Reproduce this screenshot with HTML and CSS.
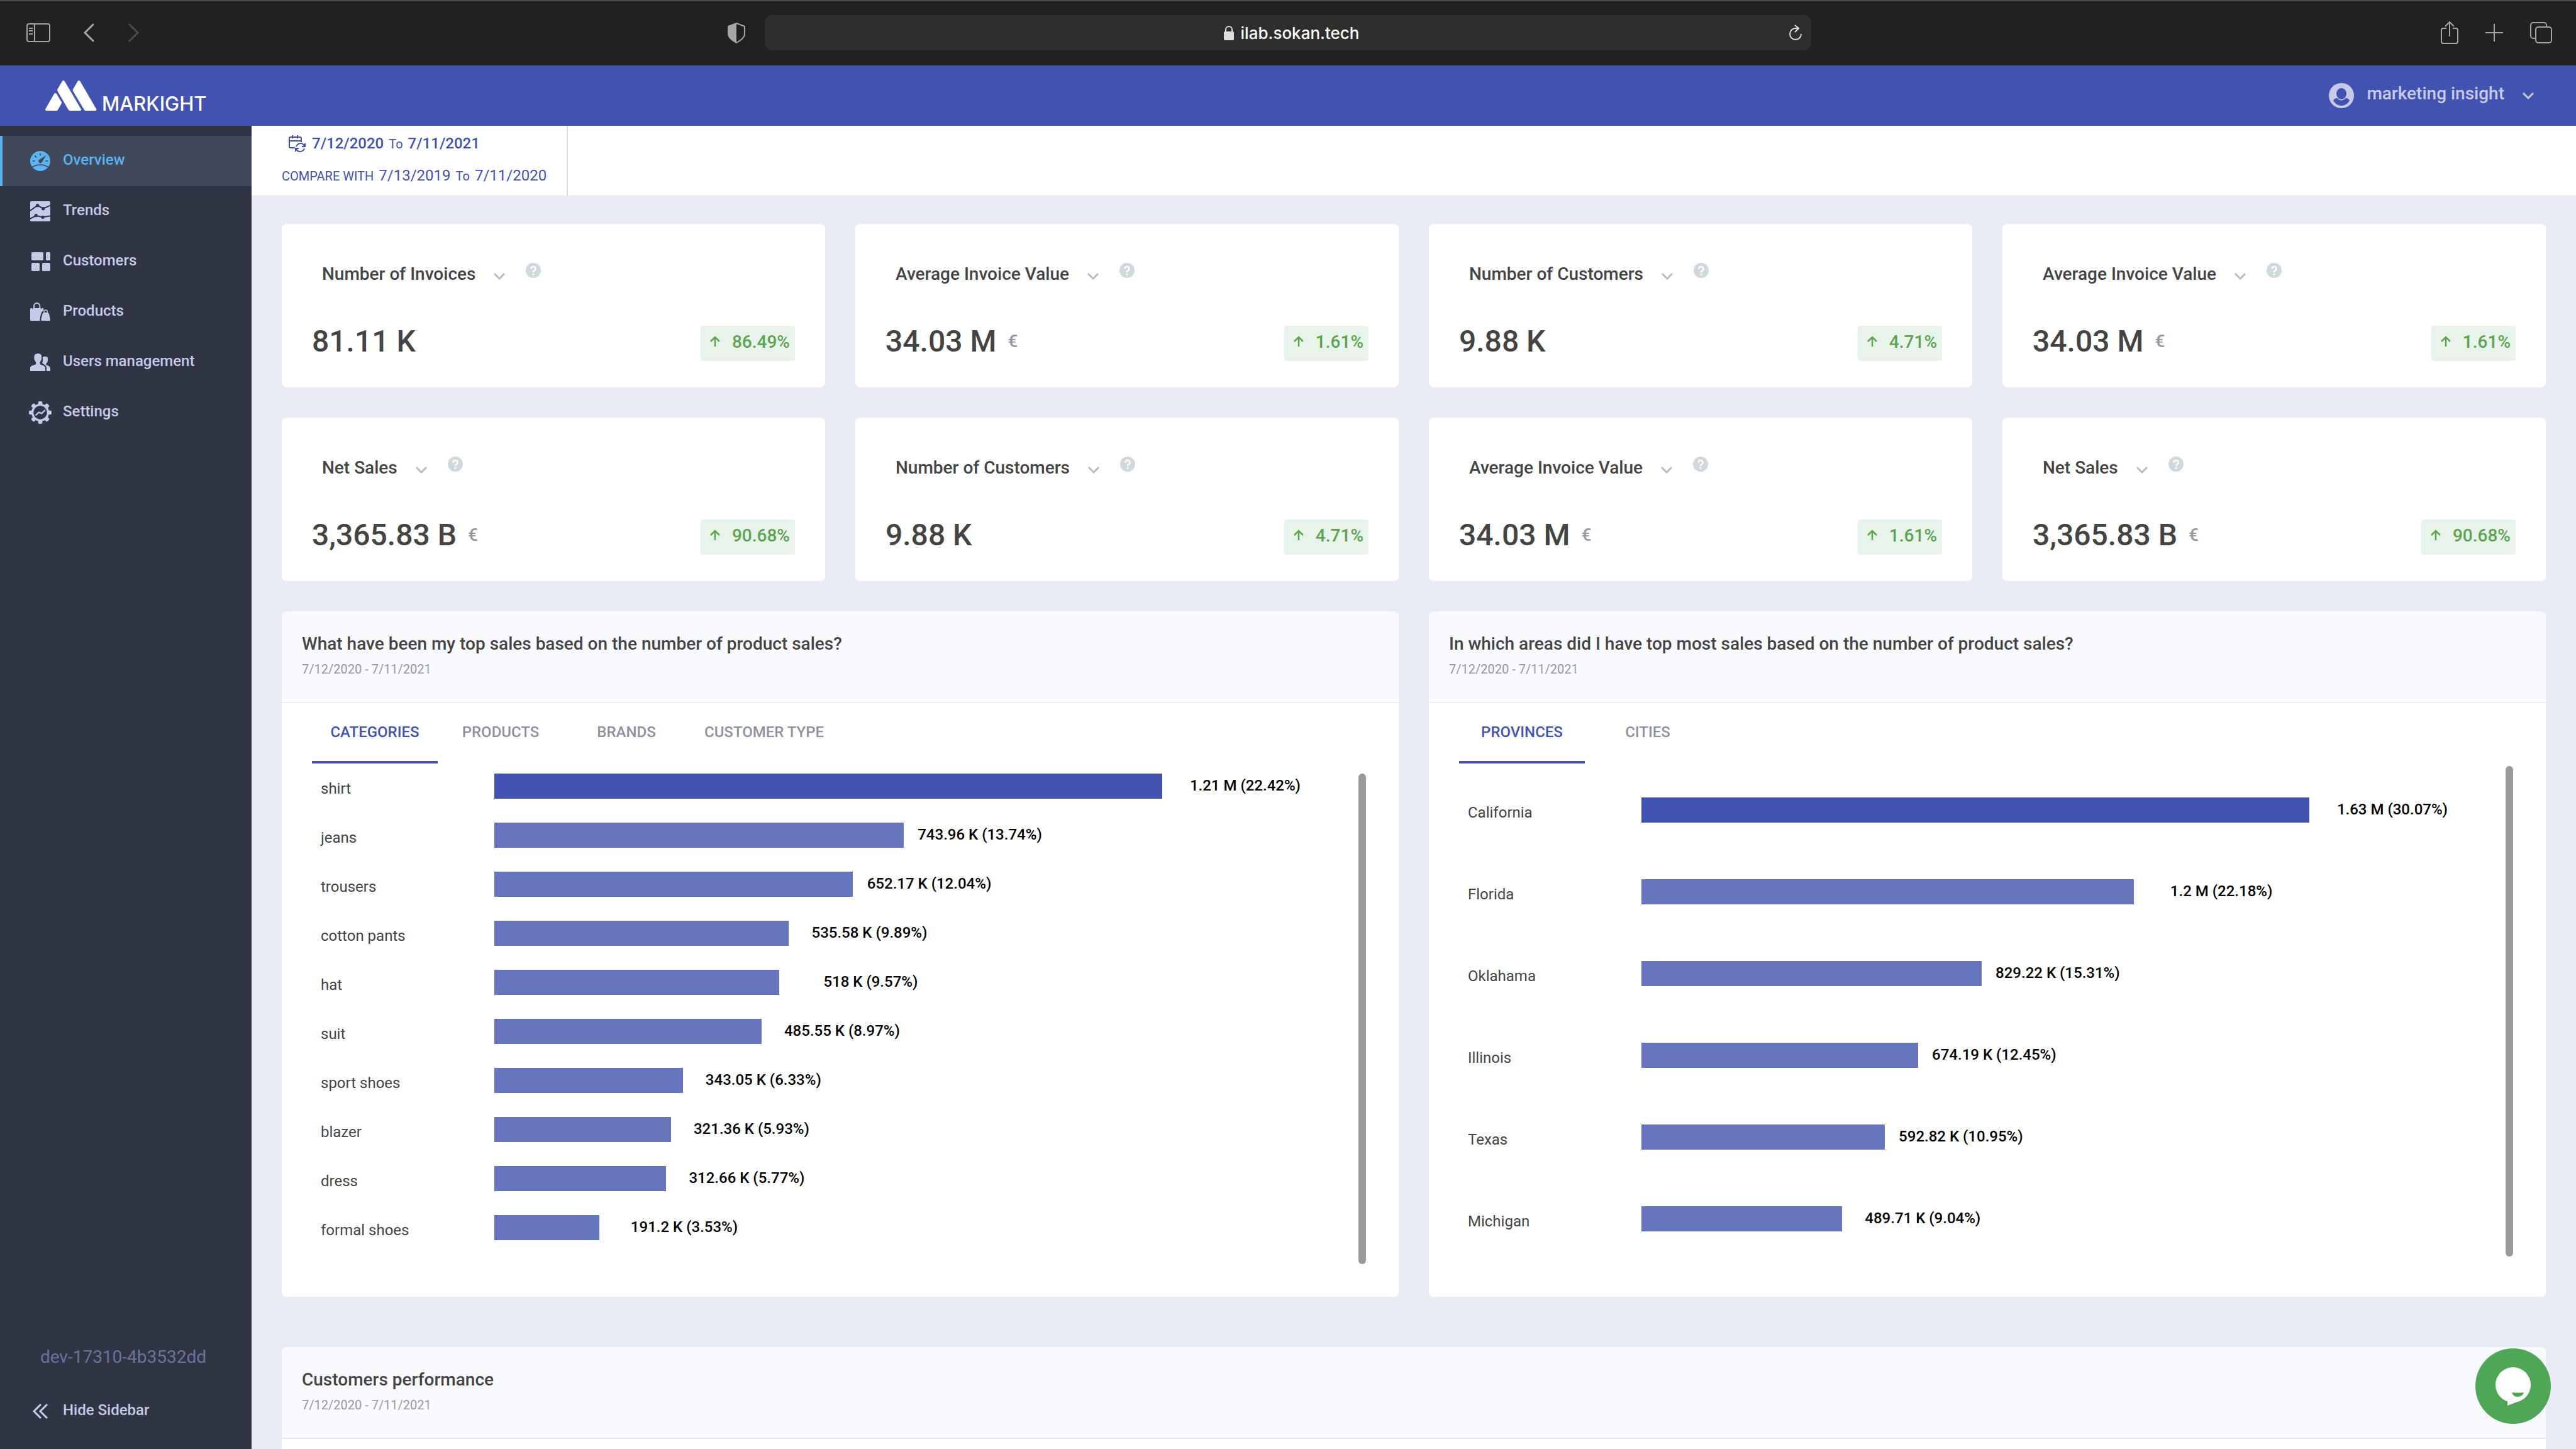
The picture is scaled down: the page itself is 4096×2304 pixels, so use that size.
FILE: index.html
```html
<!DOCTYPE html>
<html lang="en">
<head>
    <meta charset="UTF-8">
    <meta name="viewport" content="width=device-width, initial-scale=1.0">
    <title>Markight - Overview</title>
    <link rel="stylesheet" href="styles.css">
</head>
<body>
    <svg class="sprite" aria-hidden="true">
        <symbol id="chevron" viewBox="0 0 20 12"><path d="M2 2l8 8 8-8" fill="none" stroke="currentColor" stroke-width="3"/></symbol>
        <symbol id="help" viewBox="0 0 24 24"><circle cx="12" cy="12" r="12" fill="#cfd8dc"/><path d="M8.6 9.4a3.4 3.4 0 1 1 5 3c-1.2.7-1.6 1.2-1.6 2.6" fill="none" stroke="#fff" stroke-width="2.6"/><circle cx="12" cy="18" r="1.6" fill="#fff"/></symbol>
        <symbol id="up" viewBox="0 0 18 18"><path d="M9 17V2M2 9l7-7 7 7" fill="none" stroke="currentColor" stroke-width="2.5"/></symbol>
    </svg>

    <div class="browser">
        <div class="browser-left">
            <button class="icon-btn" aria-label="Show sidebar">
                <svg width="40" height="32" viewBox="0 0 40 32" fill="none" stroke="#a5a5a3" stroke-width="2"><rect x="2" y="2" width="36" height="28" rx="3"/><path d="M14 2v28M5 9h6M5 13h6M5 18h6"/></svg>
            </button>
            <button class="icon-btn back" aria-label="Back">
                <svg width="18" height="30" viewBox="0 0 18 30" fill="none" stroke="#a5a5a3" stroke-width="3" stroke-linecap="round"><path d="M16 2L3 15l13 13"/></svg>
            </button>
            <button class="icon-btn forward" aria-label="Forward">
                <svg width="18" height="30" viewBox="0 0 18 30" fill="none" stroke="#4b4b49" stroke-width="3" stroke-linecap="round"><path d="M2 2l13 13L2 28"/></svg>
            </button>
            <button class="icon-btn shield" aria-label="Privacy report">
                <svg width="30" height="34" viewBox="0 0 30 34"><path d="M15 2L28 7v11c0 7-6 11-13 15C8 29 2 25 2 18V7z" fill="none" stroke="#a5a5a3" stroke-width="2"/><path d="M15 2L2 7v11c0 7 6 11 13 15z" fill="#a5a5a3"/></svg>
            </button>
        </div>
        <div class="address">
            <span class="address-text">
                <svg width="18" height="26" viewBox="0 0 18 26"><path d="M4 12V8a5 5 0 0 1 10 0v4" fill="none" stroke="#dfdfdd" stroke-width="2"/><rect x="1" y="11" width="16" height="14" rx="2" fill="#dfdfdd"/></svg>
                ilab.sokan.tech
            </span>
            <button class="icon-btn" aria-label="Reload">
                <svg width="22" height="28" viewBox="0 0 22 28" fill="none" stroke="#dfdfdd" stroke-width="2"><path d="M20 16a9 9 0 1 1-9-9h5M10 2l6 5-6 6"/></svg>
            </button>
        </div>
        <div class="browser-right">
            <button class="icon-btn" aria-label="Share">
                <svg width="30" height="38" viewBox="0 0 30 38" fill="none" stroke="#a5a5a3" stroke-width="2"><path d="M10 12H5a3 3 0 0 0-3 3v18a3 3 0 0 0 3 3h20a3 3 0 0 0 3-3V15a3 3 0 0 0-3-3h-5M15 25V3M8 9l7-7 7 7"/></svg>
            </button>
            <button class="icon-btn" aria-label="New tab">
                <svg width="28" height="28" viewBox="0 0 28 28" stroke="#a5a5a3" stroke-width="2"><path d="M14 0v28M0 14h28"/></svg>
            </button>
            <button class="icon-btn" aria-label="Show tabs">
                <svg width="36" height="36" viewBox="0 0 36 36" fill="none" stroke="#a5a5a3" stroke-width="2"><rect x="10" y="9" width="25" height="25" rx="4"/><path d="M10 27H6a4 4 0 0 1-4-4V6a4 4 0 0 1 4-4h17a4 4 0 0 1 4 4v3"/></svg>
            </button>
        </div>
    </div>

    <header class="header">
        <a class="logo" href="#">
            <svg width="82" height="48" viewBox="0 0 246 144" fill="#fff"><path d="M43 62q5-4 10 0l24 40q3 4 0 8l-17 30q-3 4-7 4H6q-8-1-5-8z"/><path d="M81 3q5-6 11 0l79 134q2 6-5 7h-49q-4 0-7-5L58 50q-2-4 0-8z"/><path d="M155 3q5-6 11 0l78 134q2 6-5 7h-47q-4 0-7-5L132 50q-2-4 0-8z"/></svg>
            <span>MARKIGHT</span>
        </a>
        <button class="user">
            <svg width="40" height="40" viewBox="0 0 40 40"><circle cx="20" cy="20" r="20" fill="#c5cae9"/><ellipse cx="20" cy="17" rx="8" ry="9" fill="#4252b0"/><path d="M7 28q2-4 6-4 7 7 14 0 4 0 6 4-5 8-13 8T7 28z" fill="#4252b0"/></svg>
            <span class="user-name">marketing insight</span>
            <svg width="20" height="12"><use href="#chevron"/></svg>
        </button>
    </header>

    <div class="page">
        <aside class="sidebar">
            <nav class="menu">
                <a class="menu-item active" href="#">
                    <svg width="36" height="36" viewBox="-6 -6 108 108"><circle cx="48" cy="48" r="48" fill="#5bb3ef"/><g stroke="#40485c" fill="none" stroke-width="5"><path d="M48 11v11M22 22l8 9M11 48h12M73 48h12M8 78q40-24 80 0"/></g><path d="M76 21L57 52a9 9 0 1 1-15-9z" fill="#40485c"/></svg>
                    <span>Overview</span>
                </a>
                <a class="menu-item" href="#">
                    <svg width="36" height="36" viewBox="-6 -6 108 108"><rect width="96" height="96" rx="5" fill="#c5cae9"/><g stroke="#303544" fill="none" stroke-width="6"><path d="M-2 46l37-26 27 15 36-16M-2 84l30-15 32 7 38-6"/></g><g fill="#303544"><circle cx="35" cy="20" r="8"/><circle cx="62" cy="35" r="8"/><circle cx="28" cy="68" r="8"/><circle cx="60" cy="76" r="8"/></g></svg>
                    <span>Trends</span>
                </a>
                <a class="menu-item" href="#">
                    <svg width="36" height="36" viewBox="-6 -6 108 108" fill="#c5cae9"><rect x="6" y="3" width="57" height="39" rx="5"/><rect x="75" y="3" width="21" height="39" rx="5"/><rect x="6" y="54" width="39" height="39" rx="5"/><rect x="57" y="54" width="39" height="39" rx="5"/></svg>
                    <span>Customers</span>
                </a>
                <a class="menu-item" href="#">
                    <svg width="36" height="36" viewBox="-6 -6 108 108" fill="#c5cae9"><path d="M0 34q0-4 4-4h4q3 7 6 0h36q3 7 6 0h4q4 0 4 6v4q-16 10-18 50H5q-5 0-5-5z"/><path d="M18 32V20a14 14 0 0 1 28 0v12" fill="none" stroke="#c5cae9" stroke-width="6"/><path d="M52 85l6-27q3-8 9-8h14q7 0 9 8l6 27q0 5-4 5H56q-5 0-4-5z"/><path d="M66 52v-5a8 8 0 0 1 16 0v5" fill="none" stroke="#c5cae9" stroke-width="4"/></svg>
                    <span>Products</span>
                </a>
                <a class="menu-item" href="#">
                    <svg width="36" height="36" viewBox="-6 -6 108 108" fill="#c5cae9"><path d="M0 90V76q0-8 10-12l14-5q5-2 4-9l-6-12q-5-3-3-10Q16 8 36 6q22 0 18 22 2 8-3 11l-5 11q0 7 4 9l12 4q10 5 10 13v14z"/><path d="M59 24q11-7 22-1 5 4 3 14 0 12-8 18v6q20 6 20 16v13H78V76q0-10-12-18l-7-4q-3-4 1-10 2-8-1-20z"/></svg>
                    <span>Users management</span>
                </a>
                <a class="menu-item" href="#">
                    <svg width="36" height="36" viewBox="0 0 108 108"><g fill="#c5cae9"><rect x="44" width="20" height="108" rx="6"/><rect x="44" width="20" height="108" rx="6" transform="rotate(45 54 54)"/><rect x="44" width="20" height="108" rx="6" transform="rotate(90 54 54)"/><rect x="44" width="20" height="108" rx="6" transform="rotate(135 54 54)"/><circle cx="54" cy="54" r="42"/></g><circle cx="54" cy="54" r="32" fill="#303544"/><path d="M34 65l14-12 12 5 16-14" fill="none" stroke="#c5cae9" stroke-width="7" stroke-linecap="round"/></svg>
                    <span>Settings</span>
                </a>
            </nav>
            <div class="version">dev-17310-4b3532dd</div>
            <button class="menu-item hide-btn">
                <svg width="36" height="24" viewBox="0 0 36 24" fill="none" stroke="#c5cae9" stroke-width="3"><path d="M19 1L8 12l11 11M29 1L18 12l11 11"/></svg>
                <span>Hide Sidebar</span>
            </button>
        </aside>

        <main class="main">
            <div class="topbar">
                <button class="dates">
                    <span class="date-row current">
                        <svg width="28" height="28" viewBox="0 0 28 28" fill="none" stroke="#4252b0" stroke-width="2"><path d="M11 20H4a2 2 0 0 1-2-2V5a2 2 0 0 1 2-2h15a2 2 0 0 1 2 2v6M2 9h19M7 0v5M15 0v5M13 18q2-5 7-5 4 0 6 4M26 21q-2 5-7 5-4 0-6-4"/><path d="M27 13v5h-5M12 26v-5h5"/></svg>
                        <b>7/12/2020</b> <small>To</small> <b>7/11/2021</b>
                    </span>
                    <span class="date-row"><small>COMPARE WITH</small> 7/13/2019 <small>To</small> 7/11/2020</span>
                </button>
            </div>

            <div class="content">
                <section class="cards">
                    <div class="card">
                        <div class="card-head">
                            <button class="card-title">Number of Invoices <svg width="20" height="12"><use href="#chevron"/></svg></button>
                            <button class="help" aria-label="Help"><svg width="24" height="24"><use href="#help"/></svg></button>
                        </div>
                        <div class="card-foot">
                            <div class="value">81.11 K</div>
                            <div class="badge"><svg width="18" height="18"><use href="#up"/></svg>86.49%</div>
                        </div>
                    </div>
                    <div class="card">
                        <div class="card-head">
                            <button class="card-title">Average Invoice Value <svg width="20" height="12"><use href="#chevron"/></svg></button>
                            <button class="help" aria-label="Help"><svg width="24" height="24"><use href="#help"/></svg></button>
                        </div>
                        <div class="card-foot">
                            <div class="value">34.03 M <span class="unit">€</span></div>
                            <div class="badge"><svg width="18" height="18"><use href="#up"/></svg>1.61%</div>
                        </div>
                    </div>
                    <div class="card">
                        <div class="card-head">
                            <button class="card-title">Number of Customers <svg width="20" height="12"><use href="#chevron"/></svg></button>
                            <button class="help" aria-label="Help"><svg width="24" height="24"><use href="#help"/></svg></button>
                        </div>
                        <div class="card-foot">
                            <div class="value">9.88 K</div>
                            <div class="badge"><svg width="18" height="18"><use href="#up"/></svg>4.71%</div>
                        </div>
                    </div>
                    <div class="card">
                        <div class="card-head">
                            <button class="card-title">Average Invoice Value <svg width="20" height="12"><use href="#chevron"/></svg></button>
                            <button class="help" aria-label="Help"><svg width="24" height="24"><use href="#help"/></svg></button>
                        </div>
                        <div class="card-foot">
                            <div class="value">34.03 M <span class="unit">€</span></div>
                            <div class="badge"><svg width="18" height="18"><use href="#up"/></svg>1.61%</div>
                        </div>
                    </div>
                    <div class="card">
                        <div class="card-head">
                            <button class="card-title">Net Sales <svg width="20" height="12"><use href="#chevron"/></svg></button>
                            <button class="help" aria-label="Help"><svg width="24" height="24"><use href="#help"/></svg></button>
                        </div>
                        <div class="card-foot">
                            <div class="value">3,365.83 B <span class="unit">€</span></div>
                            <div class="badge"><svg width="18" height="18"><use href="#up"/></svg>90.68%</div>
                        </div>
                    </div>
                    <div class="card">
                        <div class="card-head">
                            <button class="card-title">Number of Customers <svg width="20" height="12"><use href="#chevron"/></svg></button>
                            <button class="help" aria-label="Help"><svg width="24" height="24"><use href="#help"/></svg></button>
                        </div>
                        <div class="card-foot">
                            <div class="value">9.88 K</div>
                            <div class="badge"><svg width="18" height="18"><use href="#up"/></svg>4.71%</div>
                        </div>
                    </div>
                    <div class="card">
                        <div class="card-head">
                            <button class="card-title">Average Invoice Value <svg width="20" height="12"><use href="#chevron"/></svg></button>
                            <button class="help" aria-label="Help"><svg width="24" height="24"><use href="#help"/></svg></button>
                        </div>
                        <div class="card-foot">
                            <div class="value">34.03 M <span class="unit">€</span></div>
                            <div class="badge"><svg width="18" height="18"><use href="#up"/></svg>1.61%</div>
                        </div>
                    </div>
                    <div class="card">
                        <div class="card-head">
                            <button class="card-title">Net Sales <svg width="20" height="12"><use href="#chevron"/></svg></button>
                            <button class="help" aria-label="Help"><svg width="24" height="24"><use href="#help"/></svg></button>
                        </div>
                        <div class="card-foot">
                            <div class="value">3,365.83 B <span class="unit">€</span></div>
                            <div class="badge"><svg width="18" height="18"><use href="#up"/></svg>90.68%</div>
                        </div>
                    </div>
                </section>

                <section class="panels">
                    <div class="panel">
                        <div class="panel-head">
                            <h2>What have been my top sales based on the number of product sales?</h2>
                            <p>7/12/2020 - 7/11/2021</p>
                        </div>
                        <div class="tabs">
                            <button class="tab active">CATEGORIES</button>
                            <button class="tab">PRODUCTS</button>
                            <button class="tab">BRANDS</button>
                            <button class="tab">CUSTOMER TYPE</button>
                        </div>
                        <div class="chart">
                            <ul class="bars">
                                <li><span class="name">shirt</span><div class="track"><div class="bar top" style="width: 100%"></div><span class="num">1.21 M (22.42%)</span></div></li>
                                <li><span class="name">jeans</span><div class="track"><div class="bar" style="width: 61.28%"></div><span class="num">743.96 K (13.74%)</span></div></li>
                                <li><span class="name">trousers</span><div class="track"><div class="bar" style="width: 53.7%"></div><span class="num">652.17 K (12.04%)</span></div></li>
                                <li><span class="name">cotton pants</span><div class="track"><div class="bar" style="width: 44.11%"></div><span class="num">535.58 K (9.89%)</span></div></li>
                                <li><span class="name">hat</span><div class="track"><div class="bar" style="width: 42.69%"></div><span class="num">518 K (9.57%)</span></div></li>
                                <li><span class="name">suit</span><div class="track"><div class="bar" style="width: 40.01%"></div><span class="num">485.55 K (8.97%)</span></div></li>
                                <li><span class="name">sport shoes</span><div class="track"><div class="bar" style="width: 28.23%"></div><span class="num">343.05 K (6.33%)</span></div></li>
                                <li><span class="name">blazer</span><div class="track"><div class="bar" style="width: 26.45%"></div><span class="num">321.36 K (5.93%)</span></div></li>
                                <li><span class="name">dress</span><div class="track"><div class="bar" style="width: 25.74%"></div><span class="num">312.66 K (5.77%)</span></div></li>
                                <li><span class="name">formal shoes</span><div class="track"><div class="bar" style="width: 15.74%"></div><span class="num">191.2 K (3.53%)</span></div></li>
                            </ul>
                            <div class="scrollbar"></div>
                        </div>
                    </div>

                    <div class="panel">
                        <div class="panel-head">
                            <h2>In which areas did I have top most sales based on the number of product sales?</h2>
                            <p>7/12/2020 - 7/11/2021</p>
                        </div>
                        <div class="tabs">
                            <button class="tab active">PROVINCES</button>
                            <button class="tab">CITIES</button>
                        </div>
                        <div class="chart areas">
                            <ul class="bars">
                                <li><span class="name">California</span><div class="track"><div class="bar top" style="width: 100%"></div><span class="num">1.63 M (30.07%)</span></div></li>
                                <li><span class="name">Florida</span><div class="track"><div class="bar" style="width: 73.76%"></div><span class="num">1.2 M (22.18%)</span></div></li>
                                <li><span class="name">Oklahama</span><div class="track"><div class="bar" style="width: 50.91%"></div><span class="num">829.22 K (15.31%)</span></div></li>
                                <li><span class="name">Illinois</span><div class="track"><div class="bar" style="width: 41.4%"></div><span class="num">674.19 K (12.45%)</span></div></li>
                                <li><span class="name">Texas</span><div class="track"><div class="bar" style="width: 36.41%"></div><span class="num">592.82 K (10.95%)</span></div></li>
                                <li><span class="name">Michigan</span><div class="track"><div class="bar" style="width: 30.06%"></div><span class="num">489.71 K (9.04%)</span></div></li>
                            </ul>
                            <div class="scrollbar"></div>
                        </div>
                    </div>
                </section>

                <section class="panel performance">
                    <div class="panel-head">
                        <h2>Customers performance</h2>
                        <p>7/12/2020 - 7/11/2021</p>
                    </div>
                    <div class="panel-body"></div>
                </section>
            </div>
        </main>
    </div>

    <button class="chat" aria-label="Open chat">
        <svg width="120" height="120" viewBox="0 0 120 120"><circle cx="60" cy="60" r="60" fill="#4fa657"/><circle cx="60" cy="58" r="28" fill="#fff"/><path d="M51 82v9l21-8z" fill="#fff"/><path d="M58 70q9 1 19 0-2 7-10 7-7 0-9-7z" fill="#4fa657"/></svg>
    </button>
</body>
</html>
```

FILE: styles.css
```css
* {
    box-sizing: border-box;
    margin: 0;
    padding: 0;
}
body {
    height: 100vh;
    display: flex;
    flex-direction: column;
    overflow: hidden;
    font-family: Roboto, "Liberation Sans", sans-serif;
    font-size: 24px;
    color: #444;
    background-color: #e8eaf6;
}
button {
    font: inherit;
    color: inherit;
    background: none;
    border: none;
    cursor: pointer;
}
a {
    color: inherit;
    text-decoration: none;
}
ul {
    list-style: none;
}
svg {
    flex: none;
    display: block;
}
.sprite {
    position: absolute;
    width: 0;
    height: 0;
}

/* browser bar */
.browser {
    flex: none;
    height: 104px;
    display: grid;
    grid-template-columns: 19fr 26fr 19fr;
    align-items: center;
    padding-bottom: 2px;
    background-color: #21211f;
    border-top: 2px solid #4a4a49;
}
.browser-left {
    display: flex;
    align-items: center;
    padding: 0 30px 0 41px;
}
.back {
    margin-left: 51px;
}
.forward {
    margin-left: 54px;
}
.shield {
    margin-left: auto;
}
.address {
    height: 56px;
    display: flex;
    align-items: center;
    padding: 0 14px 0 46px;
    border-radius: 12px;
    background-color: #2e2e2c;
    color: #fff;
    font: 500 26px Inter, sans-serif;
}
.address-text {
    flex: 1;
    display: flex;
    justify-content: center;
    align-items: center;
    gap: 10px;
}
.browser-right {
    display: flex;
    align-items: center;
    justify-content: flex-end;
    gap: 42px;
    padding-right: 38px;
}

/* header */
.header {
    flex: none;
    height: 96px;
    display: flex;
    justify-content: space-between;
    align-items: center;
    padding: 0 66px 0 72px;
    background-color: #4252b0;
}
.logo {
    display: flex;
    align-items: flex-end;
    gap: 8px;
    color: #fff;
    font: 500 31px/34px Inter, sans-serif;
}
.logo span {
    height: 28px;
}
.user {
    display: flex;
    align-items: center;
    gap: 20px;
    color: #c5cae9;
    font-size: 28px;
    font-weight: 500;
}
.user-name {
    padding-bottom: 8px;
    margin-right: 8px;
}

.page {
    flex: 1;
    display: flex;
    min-height: 0;
}

/* sidebar */
.sidebar {
    flex: none;
    width: 400px;
    display: flex;
    flex-direction: column;
    padding: 16px 0 20px;
    background-color: #303544;
    color: #c5cae9;
}
.menu {
    flex: 1;
}
.menu-item {
    height: 80px;
    display: flex;
    align-items: center;
    gap: 18px;
    padding-left: 42px;
    border-left: 4px solid transparent;
    font-weight: 500;
}
.menu-item span {
    padding-bottom: 4px;
}
.active.menu-item {
    background-color: #40485c;
    border-color: #5bb3ef;
    color: #5bb3ef;
}
.version {
    text-align: center;
    padding-bottom: 26px;
    padding-right: 8px;
    font-size: 28px;
    line-height: 40px;
    color: #6e729a;
}

/* main */
.main {
    flex: 1;
    min-width: 0;
    overflow: hidden;
}
.topbar {
    height: 112px;
    background-color: #fff;
    border-bottom: 2px solid #f0f1f8;
}
.dates {
    height: 112px;
    padding: 0 32px 4px 48px;
    border-right: 2px solid #dcdce0;
    color: #4252b0;
    text-align: left;
}
.date-row {
    display: flex;
    align-items: baseline;
    gap: 8px;
    line-height: 50px;
}
.date-row small {
    font-size: 20px;
}
.date-row b {
    font-weight: 500;
}
.current {
    padding-left: 10px;
}
.current svg {
    align-self: center;
    margin-right: 2px;
}
.content {
    display: flex;
    flex-direction: column;
    gap: 48px;
    padding: 44px 48px;
}

/* cards */
.cards {
    display: grid;
    grid-template-columns: repeat(4, 1fr);
    gap: 48px;
}
.card {
    padding: 62px 48px 42px;
    border-radius: 8px;
    background-color: #fff;
}
.card-head {
    display: flex;
    align-items: flex-start;
    gap: 32px;
    padding-left: 16px;
    margin-bottom: 60px;
}
.card-title {
    display: flex;
    align-items: center;
    gap: 28px;
    font-size: 28px;
    font-weight: 500;
    line-height: 36px;
}
.card-title svg {
    margin-top: 6px;
    color: #bbb;
}
.card-foot {
    height: 60px;
    display: flex;
    justify-content: space-between;
}
.value {
    display: flex;
    align-items: center;
    gap: 18px;
    height: 56px;
    font-size: 48px;
    font-weight: 500;
}
.unit {
    font-size: 28px;
    color: #9698a6;
}
.badge {
    align-self: flex-end;
    height: 56px;
    display: flex;
    align-items: center;
    gap: 18px;
    padding: 0 8px 6px 14px;
    border-radius: 4px;
    background-color: #e8f3ea;
    color: #5ca352;
    font-size: 28px;
    font-weight: 500;
}

/* panels */
.panels {
    display: grid;
    grid-template-columns: repeat(2, 1fr);
    gap: 48px;
}
.panel {
    border-radius: 8px;
    background-color: #fff;
    overflow: hidden;
}
.panel-head {
    height: 146px;
    padding: 30px 32px 0;
    background-color: #f9fafe;
    border-bottom: 2px solid #e8eaf6;
}
.panel-head h2 {
    font-size: 28px;
    font-weight: 500;
    line-height: 44px;
}
.panel-head p {
    font-size: 20px;
    line-height: 36px;
    color: #98989e;
}
.tabs {
    display: flex;
    padding: 0 48px;
}
.tab {
    min-width: 200px;
    height: 96px;
    padding: 0 24px;
    border-bottom: 4px solid transparent;
    font-weight: 500;
    color: #9190a0;
}
.active.tab {
    border-bottom-color: #4252b0;
    color: #4252b0;
}
.chart {
    display: flex;
    padding: 16px 52px 52px 62px;
}
.bars {
    flex: 1;
}
.bars li {
    height: 78px;
    display: flex;
    align-items: flex-start;
}
.name {
    width: 276px;
    line-height: 48px;
}
.track {
    flex: 1;
    display: flex;
    margin-right: 312px;
}
.bar {
    flex: none;
    height: 40px;
    background-color: #6674bc;
}
.bar.top {
    background-color: #4252b0;
}
.num {
    flex: none;
    width: 220px;
    line-height: 38px;
    font-weight: 500;
    color: #000;
    text-align: right;
}
.scrollbar {
    width: 12px;
    border-radius: 6px;
    background-color: #999;
}
.areas {
    padding-top: 4px;
    padding-bottom: 64px;
}
.areas li {
    height: 130px;
    padding-top: 50px;
}
.performance {
    margin-top: 32px;
}
.panel-body {
    height: 600px;
}

.chat {
    position: fixed;
    right: 40px;
    bottom: 40px;
}
```
